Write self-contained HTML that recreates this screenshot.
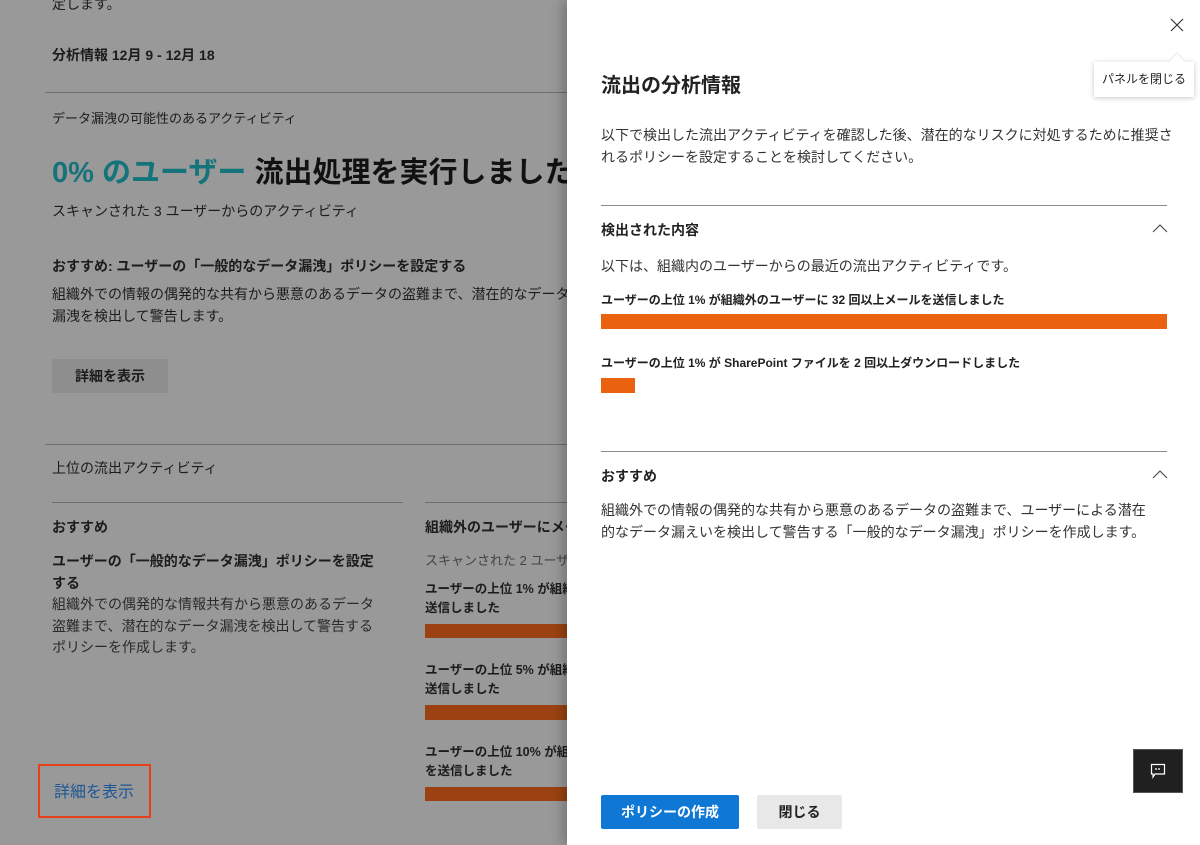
<!DOCTYPE html>
<html><head><meta charset="utf-8"><style>
*{margin:0;padding:0;box-sizing:border-box}
body{width:1200px;height:845px;overflow:hidden;position:relative;background:#999;font-family:"Liberation Sans","Noto Sans CJK JP",sans-serif;color:#1c1c1c}
.a{position:absolute;white-space:nowrap}
.hr{position:absolute;height:1px;background:#6e6e6e}
.bar{position:absolute;background:#9c4212}
.panel{position:absolute;left:567px;top:0;width:633px;height:845px;background:#fff;box-shadow:-4px 0 12px rgba(0,0,0,.25)}
.p{position:absolute;white-space:nowrap;color:#222}
</style></head><body>
<div class="a" style="left:52px;top:-6px;font-size:14px">定します。</div>
<div class="a" style="left:52px;top:45px;font-size:14px;font-weight:bold">分析情報 12月 9 - 12月 18</div>
<div class="hr" style="left:45px;top:92px;width:522px"></div>
<div class="a" style="left:52px;top:108px;font-size:13px">データ漏洩の可能性のあるアクティビティ</div>
<div class="a" style="left:52px;top:149px;font-size:29px;font-weight:bold;color:#111"><span style="color:#15737a">0% のユーザー</span> 流出処理を実行しました</div>
<div class="a" style="left:52px;top:201px;font-size:14px">スキャンされた 3 ユーザーからのアクティビティ</div>
<div class="a" style="left:52px;top:256px;font-size:14px;font-weight:bold">おすすめ: ユーザーの「一般的なデータ漏洩」ポリシーを設定する</div>
<div class="a" style="left:52px;top:283px;font-size:14px;line-height:22px">組織外での情報の偶発的な共有から悪意のあるデータの盗難まで、潜在的なデータ<br>漏洩を検出して警告します。</div>
<div class="a" style="left:52px;top:359px;width:116px;height:34px;background:#8e8e8e;font-size:14px;font-weight:bold;text-align:center;line-height:34px">詳細を表示</div>
<div class="hr" style="left:45px;top:444px;width:522px"></div>
<div class="a" style="left:52px;top:458px;font-size:14px">上位の流出アクティビティ</div>
<div class="hr" style="left:52px;top:502px;width:351px"></div>
<div class="hr" style="left:425px;top:502px;width:142px"></div>
<div class="a" style="left:52px;top:517px;font-size:14px;font-weight:bold">おすすめ</div>
<div class="a" style="left:52px;top:550px;font-size:14px;font-weight:bold;line-height:22px">ユーザーの「一般的なデータ漏洩」ポリシーを設定<br>する</div>
<div class="a" style="left:52px;top:594px;font-size:14px;line-height:21.5px;color:#2a2a2a">組織外での偶発的な情報共有から悪意のあるデータ<br>盗難まで、潜在的なデータ漏洩を検出して警告する<br>ポリシーを作成します。</div>
<div class="a" style="left:425px;top:517px;font-size:14px;font-weight:bold">組織外のユーザーにメール</div>
<div class="a" style="left:425px;top:550px;font-size:13px;color:#444">スキャンされた 2 ユーザー</div>
<div class="a" style="left:425px;top:580px;font-size:12.5px;font-weight:bold;line-height:19px">ユーザーの上位 1% が組織外<br>送信しました</div>
<div class="bar" style="left:425px;top:624px;width:142px;height:14px"></div>
<div class="a" style="left:425px;top:661px;font-size:12.5px;font-weight:bold;line-height:19px">ユーザーの上位 5% が組織外<br>送信しました</div>
<div class="bar" style="left:425px;top:705px;width:142px;height:15px"></div>
<div class="a" style="left:425px;top:743px;font-size:12.5px;font-weight:bold;line-height:19px">ユーザーの上位 10% が組織<br>を送信しました</div>
<div class="bar" style="left:425px;top:787px;width:142px;height:14px"></div>
<div class="a" style="left:38px;top:764px;width:113px;height:54px;border:2px solid #e8401c"></div>
<div class="a" style="left:54px;top:778px;font-size:16px;color:#1d5796">詳細を表示</div>

<div class="panel">
<svg style="position:absolute;left:603px;top:18px" width="14" height="14" viewBox="0 0 14 14"><path d="M1 1L13 13M13 1L1 13" stroke="#333" stroke-width="1.2"/></svg>
<div style="position:absolute;left:527px;top:62px;width:100px;height:35px;background:#fff;box-shadow:0 1px 5px rgba(0,0,0,.22);font-size:12px;line-height:35px;text-align:center;color:#222">パネルを閉じる</div>
<div style="position:absolute;left:605px;top:56px;width:10px;height:10px;background:#fff;transform:rotate(45deg);box-shadow:-1px -1px 2px rgba(0,0,0,.1)"></div>
<div class="p" style="left:34px;top:69px;font-size:20px;font-weight:bold">流出の分析情報</div>
<div class="p" style="left:34px;top:124px;font-size:14px;line-height:22px;color:#333">以下で検出した流出アクティビティを確認した後、潜在的なリスクに対処するために推奨さ<br>れるポリシーを設定することを検討してください。</div>
<div style="position:absolute;left:34px;top:205px;width:566px;height:1px;background:#8a8a8a"></div>
<div class="p" style="left:34px;top:220px;font-size:14px;font-weight:bold">検出された内容</div>
<svg style="position:absolute;left:585px;top:223px" width="16" height="10" viewBox="0 0 16 10"><path d="M1 9L8 2L15 9" fill="none" stroke="#444" stroke-width="1.1"/></svg>
<div class="p" style="left:34px;top:256px;font-size:14px;color:#333">以下は、組織内のユーザーからの最近の流出アクティビティです。</div>
<div class="p" style="left:34px;top:291px;font-size:12px;font-weight:bold">ユーザーの上位 1% が組織外のユーザーに 32 回以上メールを送信しました</div>
<div style="position:absolute;left:34px;top:314px;width:566px;height:15px;background:#ea6110"></div>
<div class="p" style="left:34px;top:354px;font-size:12px;font-weight:bold">ユーザーの上位 1% が SharePoint ファイルを 2 回以上ダウンロードしました</div>
<div style="position:absolute;left:34px;top:378px;width:34px;height:15px;background:#ea6110"></div>
<div style="position:absolute;left:34px;top:451px;width:566px;height:1px;background:#8a8a8a"></div>
<div class="p" style="left:34px;top:466px;font-size:14px;font-weight:bold">おすすめ</div>
<svg style="position:absolute;left:585px;top:469px" width="16" height="10" viewBox="0 0 16 10"><path d="M1 9L8 2L15 9" fill="none" stroke="#444" stroke-width="1.1"/></svg>
<div class="p" style="left:34px;top:499px;font-size:14px;line-height:22px;color:#333">組織外での情報の偶発的な共有から悪意のあるデータの盗難まで、ユーザーによる潜在<br>的なデータ漏えいを検出して警告する「一般的なデータ漏洩」ポリシーを作成します。</div>
<div style="position:absolute;left:566px;top:749px;width:50px;height:44px;background:#202020;border:1px solid #555"></div>
<svg style="position:absolute;left:583px;top:763px" width="16" height="16" viewBox="0 0 16 16"><path d="M1.5 1.5H14.5V11H5L3 14V11H1.5Z" fill="none" stroke="#fff" stroke-width="1.2"/><path d="M6 5V7M9 5V7" stroke="#fff" stroke-width="1.3"/></svg>
<div style="position:absolute;left:34px;top:795px;width:138px;height:34px;background:#0f78d4;border-radius:2px;color:#fff;font-size:14px;font-weight:bold;text-align:center;line-height:34px">ポリシーの作成</div>
<div style="position:absolute;left:190px;top:795px;width:85px;height:34px;background:#e8e8e8;border-radius:2px;color:#222;font-size:14px;font-weight:bold;text-align:center;line-height:34px">閉じる</div>
</div>
</body></html>
